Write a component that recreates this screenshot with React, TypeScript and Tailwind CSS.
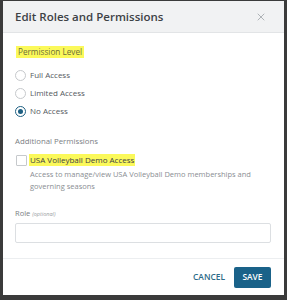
import { X } from 'lucide-react';

const options = ['Full Access', 'Limited Access', 'No Access'];

export default function App() {
  return (
    <div className="w-[287px] h-[300px] bg-[#3b3b3b] pt-px pl-[3px] pr-[3px] pb-[5px] font-['Open_Sans',sans-serif]">
      <div className="h-full bg-white flex flex-col">
        <div className="h-[32px] shrink-0 bg-[#f1f2f3] border-b border-[#e2e4e6] flex items-center justify-between pl-[12px] pr-[17px]">
          <span className="text-[11.5px] font-semibold text-[#3d4145]">Edit Roles and Permissions</span>
          <X size={12} strokeWidth={1.3} className="text-[#8a8f94]" />
        </div>

        <div className="pl-[12px] pr-[13px] pt-[13px] flex-1 flex flex-col">
          <div className="flex">
            <span className="ml-px bg-[#fbf95a] px-[2px] text-[8.2px] leading-[12px] text-[#6b6f3a]">Permission Level</span>
          </div>

          <div className="mt-[11px] flex flex-col gap-[6px]">
            {options.map((o) => {
              const on = o === 'No Access';
              return (
                <label key={o} className="flex items-center gap-[4px] h-[12px]">
                  <span
                    className={`w-[11px] h-[11px] rounded-full border flex items-center justify-center ${
                      on ? 'border-[#1d5f82]' : 'border-[#c6c9cc]'
                    }`}
                  >
                    {on && <span className="w-[5px] h-[5px] rounded-full bg-[#1d5f82]" />}
                  </span>
                  <span className="text-[8px] leading-[12px] text-[#55595e]">{o}</span>
                </label>
              );
            })}
          </div>

          <div className="mt-[18px] text-[7.8px] leading-[12px] text-[#7a7e83]">Additional Permissions</div>

          <div className="mt-[7px] flex items-start pl-px">
            <span className="w-[11px] h-[11px] mt-px border border-[#c6c9cc] rounded-[1px] shrink-0" />
            <div className="ml-[2px] flex-1 min-w-0">
              <div className="flex">
                <span className="bg-[#fbf95a] px-px text-[8px] leading-[12px] text-[#3d4145]">USA Volleyball Demo Access</span>
              </div>
              <div className="mt-[2px] text-[7.5px] leading-[12px] text-[#8a8e93] pl-px">
                Access to manage/view USA Volleyball Demo memberships and governing seasons
              </div>
            </div>
          </div>

          <div className="mt-[15px] text-[7.5px] leading-[12px] text-[#7a7e83]">
            Role <span className="italic text-[5.5px] text-[#9a9ea3]">(optional)</span>
          </div>
          <div className="mt-[3px] h-[20px] border border-[#dcdfe2] rounded-[2px]" />
        </div>

        <div className="h-[37px] shrink-0 border-t border-[#eceef0] flex items-center justify-end gap-[9px] pr-[13px]">
          <span className="text-[8.4px] font-semibold text-[#2c6b88]">CANCEL</span>
          <span className="h-[21px] w-[37px] bg-[#1a6289] rounded-[2px] text-white text-[8.4px] font-semibold flex items-center justify-center">SAVE</span>
        </div>
      </div>
    </div>
  );
}
